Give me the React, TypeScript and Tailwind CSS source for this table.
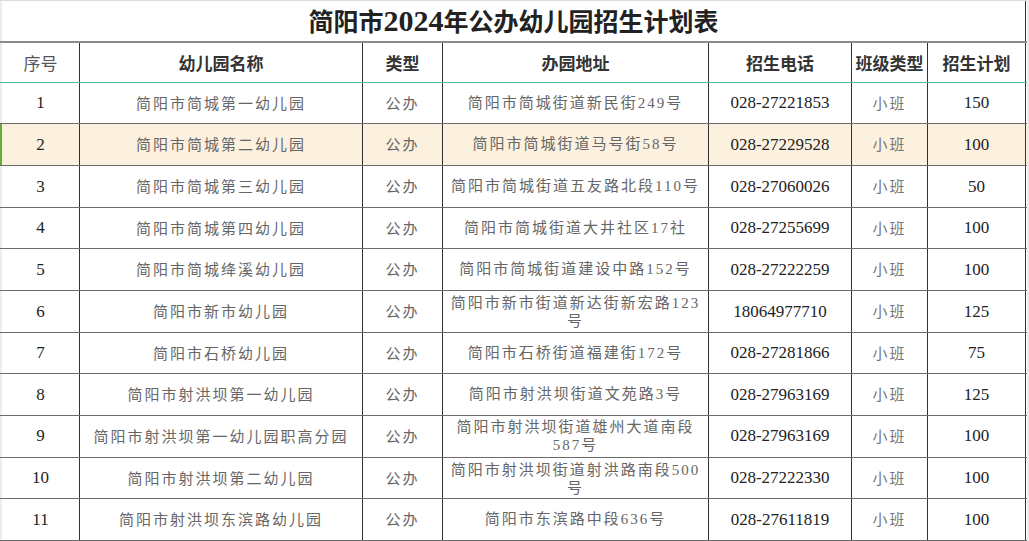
const cols = "grid grid-cols-[78px_283px_80px_266px_143px_76px_98px]";
const cjk = "font-['Noto_Sans_CJK_SC',sans-serif]";
const serif = "font-['Liberation_Serif','Noto_Sans_CJK_SC',serif]";

type Row = {
  no: number;
  name: string;
  addr: string[];
  pad?: string;
  phone: string;
  plan: number;
};

const rows: Row[] = [
  { no: 1, name: "简阳市简城第一幼儿园", addr: ["简阳市简城街道新民街249号"], phone: "028-27221853", plan: 150 },
  { no: 2, name: "简阳市简城第二幼儿园", addr: ["简阳市简城街道马号街58号"], phone: "028-27229528", plan: 100 },
  { no: 3, name: "简阳市简城第三幼儿园", addr: ["简阳市简城街道五友路北段110号"], phone: "028-27060026", plan: 50 },
  { no: 4, name: "简阳市简城第四幼儿园", addr: ["简阳市简城街道大井社区17社"], phone: "028-27255699", plan: 100 },
  { no: 5, name: "简阳市简城绛溪幼儿园", addr: ["简阳市简城街道建设中路152号"], phone: "028-27222259", plan: 100 },
  { no: 6, name: "简阳市新市幼儿园", addr: ["简阳市新市街道新达街新宏路123", "号"], pad: "pt-[3px]", phone: "18064977710", plan: 125 },
  { no: 7, name: "简阳市石桥幼儿园", addr: ["简阳市石桥街道福建街172号"], phone: "028-27281866", plan: 75 },
  { no: 8, name: "简阳市射洪坝第一幼儿园", addr: ["简阳市射洪坝街道文苑路3号"], phone: "028-27963169", plan: 125 },
  { no: 9, name: "简阳市射洪坝第一幼儿园职高分园", addr: ["简阳市射洪坝街道雄州大道南段", "587号"], pad: "pt-[2px]", phone: "028-27963169", plan: 100 },
  { no: 10, name: "简阳市射洪坝第二幼儿园", addr: ["简阳市射洪坝街道射洪路南段500", "号"], pad: "pt-[3px]", phone: "028-27222330", plan: 100 },
  { no: 11, name: "简阳市射洪坝东滨路幼儿园", addr: ["简阳市东滨路中段636号"], phone: "028-27611819", plan: 100 },
];

const cell = "flex items-center justify-center border-r border-[#333] overflow-hidden whitespace-nowrap";

export default function App() {
  return (
    <div className="w-[1029px] h-[541px] overflow-hidden bg-white flex">
      <div className="flex flex-col w-[1027px]">
        {/* title */}
        <div className="flex h-[41px] border-t border-[#dcdcdc]">
          <div className="w-[2px] bg-[#ececec]" />
          <div
            className={`w-[1024px] border-r border-[#333] flex items-center justify-center text-[25px] font-bold text-[#222] ${cjk}`}
          >
            简阳市<span className={`${serif} text-[30px] leading-none`}>2024</span>年公办幼儿园招生计划表
          </div>
        </div>

        {/* header */}
        <div className="flex h-[41.67px] border-t-2 border-b border-t-[#8a8a8a] border-b-[#4fb8a3]">
          <div className="w-[2px] bg-[#ececec]" />
          <div className={`${cols} text-[17px] text-[#333] ${cjk}`}>
            <div className={`${cell} text-[#555]`}>序号</div>
            <div className={`${cell} font-bold`}>幼儿园名称</div>
            <div className={`${cell} font-bold`}>类型</div>
            <div className={`${cell} font-bold`}>办园地址</div>
            <div className={`${cell} font-bold`}>招生电话</div>
            <div className={`${cell} font-bold`}>班级类型</div>
            <div className={`${cell} font-bold`}>招生计划</div>
          </div>
        </div>

        {rows.map((r) => {
          const active = r.no === 2;
          return (
            <div
              key={r.no}
              className={`flex h-[41.67px] border-b border-[#6a6a6a] ${active ? "bg-[#fcf1df]" : ""}`}
            >
              <div className={`w-[2px] ${active ? "bg-[#62ad3c]" : "bg-[#ececec]"}`} />
              <div className={cols}>
                <div className={`${cell} ${serif} text-[17px] text-[#222]`}>{r.no}</div>
                <div className={`${cell} ${cjk} text-[15px] tracking-[2px] text-[#666]`}>{r.name}</div>
                <div className={`${cell} ${cjk} text-[15px] tracking-[2px] text-[#666]`}>公办</div>
                {r.addr.length > 1 ? (
                  <div
                    className={`flex flex-col items-center justify-start border-r border-[#333] overflow-hidden whitespace-nowrap ${r.pad} ${serif} text-[15px] leading-[18px] tracking-[2px] text-[#666]`}
                  >
                    {r.addr.map((l) => (
                      <span key={l}>{l}</span>
                    ))}
                  </div>
                ) : (
                  <div className={`${cell} ${serif} text-[15px] tracking-[2px] text-[#666]`}>{r.addr[0]}</div>
                )}
                <div className={`${cell} ${serif} text-[17px] text-[#222]`}>{r.phone}</div>
                <div className={`${cell} ${cjk} text-[15px] tracking-[2px] text-[#777]`}>小班</div>
                <div className={`${cell} ${serif} text-[17px] text-[#222]`}>{r.plan}</div>
              </div>
            </div>
          );
        })}
      </div>
      <div className="w-[2px] bg-[#ececec]" />
    </div>
  );
}
